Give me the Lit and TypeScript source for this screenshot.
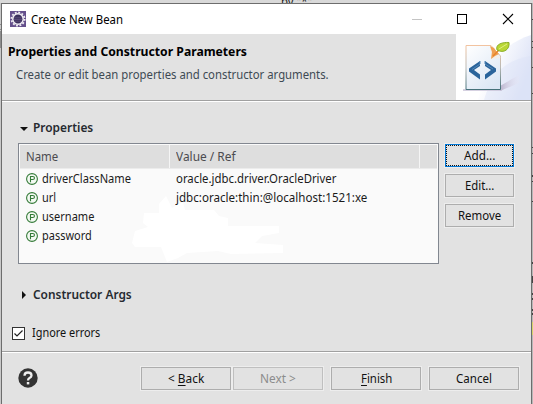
import { LitElement, html, css, svg } from "lit";
import { customElement, property } from "lit/decorators.js";

/** Text run squeezed horizontally to a given width. */
@customElement("fit-text")
class FitText extends LitElement {
  @property({ type: Number }) w = 0;
  static styles = css`
    :host { display: inline-block; white-space: nowrap; flex: none; }
    .run { display: inline-block; transform-origin: 0 50%; white-space: pre; }
  `;
  updated() {
    this.style.width = this.w + "px";
    const run = this.renderRoot.querySelector(".run") as HTMLElement;
    run.style.transform = `scaleX(${this.w / run.offsetWidth})`;
  }
  render() { return html`<span class="run"><slot></slot></span>`; }
}

@customElement("push-button")
class PushButton extends LitElement {
  static styles = css`
    :host { display: flex; box-sizing: border-box; align-items: center; justify-content: center;
      height: 23px; border: 1px solid #adadad; background: #e2e2e2; color: #111; box-shadow: 0 0 0 1px #ededed; }
    :host([focused]) { border-color: #0078d7; outline: 1px dotted #111; outline-offset: -2px; }
    :host([disabled]) { color: #8c8c8c; border-color: #bfbfbf; }
  `;
  render() { return html`<slot></slot>`; }
}

const eclipseIcon = svg`<svg width="16" height="16" viewBox="0 0 16 16">
  <rect width="16" height="16" fill="#65508c"/>
  <circle cx="8" cy="8" r="6.6" fill="none" stroke="#efedf2" stroke-width="1.8" stroke-dasharray="1.9 1.56"/>
  <circle cx="8" cy="8" r="5.2" fill="#3c315d" stroke="#f1eef4" stroke-width="1.5"/>
  <path d="M4 6.8h8M3.7 8.5h8.6M4.3 10.2h7.4" stroke="#61527f" stroke-width=".8"/>
</svg>`;

const banner = svg`<svg width="75" height="66" viewBox="0 0 75 66">
  <defs>
    <linearGradient id="bg" x1="0" y1="0" x2="1" y2=".5"><stop offset=".35" stop-color="#fff"/><stop offset="1" stop-color="#dde3f7"/></linearGradient>
    <linearGradient id="pg" x1="0" y1="0" x2=".7" y2="1"><stop offset="0" stop-color="#fff"/><stop offset="1" stop-color="#dce7f5"/></linearGradient>
    <linearGradient id="sh"><stop offset="0" stop-color="#b9b2cc"/><stop offset="1" stop-color="#e8e6f4" stop-opacity=".2"/></linearGradient>
    <linearGradient id="edge" x1="0" y1="0" x2="0" y2="1"><stop offset="0" stop-color="#f2c3a0"/><stop offset=".5" stop-color="#b9b9b5"/><stop offset="1" stop-color="#45717a"/></linearGradient>
  </defs>
  <rect width="75" height="66" fill="#fff"/>
  <path d="M22 66C29 35 44 11 75 1V66Z" fill="url(#bg)"/>
  <path d="M28 66C36 38 50 26 75 22V66Z" fill="#dce2f7" opacity=".45"/>
  <path d="M44 52L63 41V49L44 57Z" fill="url(#sh)"/>
  <path d="M7 56H46" stroke="#c9c2d7" stroke-width="1.5"/>
  <path d="M10 11.5H35L44.5 22V55.5H10Z" fill="url(#pg)" stroke="url(#edge)"/>
  <path d="M34 12L44.5 24L36 25Z" fill="#f3eee9"/>
  <path d="M34 12L38 14L40 17L43 20L39 22L35 25L36 18Z" fill="#efa052"/>
  <path d="M37 22L45 14" stroke="#e8832a" stroke-width="1.5"/>
  <path d="M41 16C39 10 47 8 53 8.500C54 15 48 20 41 16Z" fill="#b9d736" stroke="#84a821" stroke-width=".9"/>
  <path d="M43 15L51 10" stroke="#e1ef83"/>
  <path d="M24 27V32L18 36L24 40.500V45.500L13 37.500V34.500ZM29 27V32L35 36L29 40.500V45.500L40 37.500V34.500Z" fill="#2a649b"/>
  <path d="M24 27V30L16 35.500M29 27V30L37 35" fill="none" stroke="#5689b8"/>
</svg>`;

const propertyIcon = svg`<svg width="12" height="12" viewBox="0 0 12 12">
  <circle cx="6" cy="6" r="5.4" fill="#f4faf3" stroke="#347a38" stroke-width="1.1"/>
  <path d="M4.500 9.300V3.500H6.700Q8.500 3.500 8.500 5T6.700 6.500H4.500" fill="none" stroke="#347a38" stroke-width="1.1"/>
</svg>`;

const rows: [string, number, string, number][] = [
  ["driverClassName", 89, "oracle.jdbc.driver.OracleDriver", 160],
  ["url", 14, "jdbc:oracle:thin:@localhost:1521:xe", 191],
  ["username", 52, "", 0],
  ["password", 50, "", 0],
];

@customElement("app-root")
class AppRoot extends LitElement {
  static styles = css`
    * { box-sizing: border-box; }
    :host { display: block; box-sizing: border-box; width: 533px; height: 404px; overflow: hidden; position: relative; background: #c9c9c9;
      font: 12.5px/18px "Noto Sans", "Open Sans", sans-serif; color: #1b1b1b; padding: 3px 1px 0; }
    svg { display: block; flex: none; }
    .behind { position: absolute; left: 281px; top: -5px; line-height: 14px; }
    .strip { position: absolute; inset: 0 0 auto 0; height: 3px; background: #d9d9d9; }
    .window { position: relative; height: 401px; border: 1px solid #6d6d6d; border-bottom: 0; background: #e2e2e2; display: flex; flex-direction: column; }
    .title { height: 30px; background: #fff; display: flex; align-items: center; padding: 0 17px 0 8px; font-size: 13px; color: #000; flex: none; }
    .title fit-text { margin-left: 5px; }
    .controls { margin-left: auto; }
    .header { display: flex; height: 66px; flex: none; justify-content: space-between; }
    .intro { padding: 8px 0 0 6px; }
    .intro b { display: block; height: 23px; font-size: 13px; color: #000; }
    .sub { padding-left: 8px; color: #3e4a54; font-size: 13px; }
    .rule { height: 2px; border-top: 1px solid #a0a0a0; background: #fff; flex: none; }
    .body { height: 249px; flex: none; padding: 17px 16px 0; }
    .section { display: flex; align-items: center; height: 18px; font-weight: 600; color: #262a30; }
    .section svg { margin: 0 4px 0 2px; }
    .main { display: flex; margin-top: 6px; gap: 6px; }
    .table { width: 421px; height: 121px; border: 1px solid #828790; background: #fafafa; padding: 1px; position: relative; flex: none; }
    .head { display: grid; grid-template-columns: 150px 250px 1fr; height: 24px; background: #dedede; color: #4b4b4f; border-bottom: 1px solid #ececec; }
    .head > div { border-right: 1px solid #f5f5f5; padding: 3px 0 0 6px; }
    .head > div:last-child { border: 0; }
    .row { display: grid; grid-template-columns: 150px 1fr; height: 19px; position: relative; }
    .cell { display: flex; align-items: center; padding-left: 6px; gap: 4px; }
    .smear { position: absolute; left: 113px; top: 52px; }
    .side { display: grid; gap: 7px; align-content: start; padding-top: 1px; width: 69px; flex: none; }
    .args { margin-top: 22px; }
    .check { display: flex; align-items: center; margin: 20px 0 0 -6px; height: 18px; color: #111; gap: 7px; }
    .box { width: 13px; height: 13px; border: 1px solid #333; background: #fff; }
    .footer { display: flex; padding: 14px 11px 0 16px; align-items: flex-start; }
    .help { margin-top: 1px; }
    .footer push-button { width: 90px; flex: none; }
    .back { margin-left: 103px; }
    .next { margin-left: 2px; }
    .gap { margin-left: 8px; }
    u { text-underline-offset: 2px; text-decoration-thickness: 1px; text-decoration-skip-ink: none; }
    .edge { position: absolute; left: 532px; top: 3px; width: 1px; height: 401px; }
    .left { position: absolute; left: 0; top: 3px; }
  `;
  render() {
    return html`
      <div class="strip"></div>
      <div class="behind"><fit-text w="31">by "*"</fit-text></div>
      <div class="window">
        <div class="title">
          ${eclipseIcon}<fit-text w="92">Create New Bean</fit-text>
          <svg class="controls" width="102" height="12" viewBox="0 0 102 12">
            <path d="M0 6.500H10" stroke="#c4c4c4"/>
            <rect x="45.500" y="1.500" width="9" height="9" fill="none" stroke="#000"/>
            <path d="M91 1L101 11M101 1L91 11" stroke="#000" stroke-width="1.1"/>
          </svg>
        </div>
        <div class="header">
          <div class="intro">
            <b><fit-text w="239">Properties and Constructor Parameters</fit-text></b>
            <div class="sub"><fit-text w="313">Create or edit bean properties and constructor arguments.</fit-text></div>
          </div>
          ${banner}
        </div>
        <div class="rule"></div>
        <div class="body">
          <div class="section">
            <svg width="9" height="10" viewBox="0 0 9 10"><path d="M0 4H8L4 8Z" fill="#111"/></svg>
            <fit-text w="60">Properties</fit-text>
          </div>
          <div class="main">
            <div class="table">
              <svg class="smear" width="210" height="66" viewBox="0 0 210 66"><path d="M12 17H27V8L34 0L40 12L51 6L53 14H82L87 20L96 22V30H147V37L130 40L123 47L151 49V57L99 58L86 55L55 57L46 62L35 66L29 51H3L0 47L3 35L16 31L11 27Z" fill="#fff"/></svg>
              <div class="head">
                <div><fit-text w="32">Name</fit-text></div><div><fit-text w="60">Value / Ref</fit-text></div><div></div>
              </div>
              ${rows.map(([n, nw, v, vw]) => html`<div class="row">
                <div class="cell">${propertyIcon}<fit-text w=${nw}>${n}</fit-text></div>
                <div class="cell">${v ? html`<fit-text w=${vw}>${v}</fit-text>` : ""}</div>
              </div>`)}
            </div>
            <div class="side">
              <push-button focused><fit-text w="31">Add...</fit-text></push-button>
              <push-button><fit-text w="29">Edit...</fit-text></push-button>
              <push-button><fit-text w="43">Remove</fit-text></push-button>
            </div>
          </div>
          <div class="section args">
            <svg width="9" height="10" viewBox="0 0 9 10"><path d="M2 1L6 5L2 9Z" fill="#111"/></svg>
            <fit-text w="99">Constructor Args</fit-text>
          </div>
          <div class="check">
            <div class="box"><svg width="11" height="11" viewBox="0 0 11 11"><path d="M1.500 5.500L4 8L9.500 2.500" fill="none" stroke="#222" stroke-width="1.2"/></svg></div>
            <fit-text w="68">Ignore errors</fit-text>
          </div>
        </div>
        <div class="rule"></div>
        <div class="footer">
          <svg class="help" width="20" height="20" viewBox="0 0 20 20"><circle cx="10" cy="10" r="9.700" fill="#333"/><path d="M6.500 7.700Q6.500 4.500 10 4.500T13.500 7.500Q13.500 9 11.500 10Q10 10.800 10 12.500" fill="none" stroke="#eee" stroke-width="2.300"/><rect x="8.800" y="14" width="2.500" height="2.400" fill="#eee"/></svg>
          <push-button class="back"><fit-text w="36">&lt; <u>B</u>ack</fit-text></push-button>
          <push-button class="next" disabled><fit-text w="36">Next &gt;</fit-text></push-button>
          <push-button class="gap"><fit-text w="31"><u>F</u>inish</fit-text></push-button>
          <push-button class="gap"><fit-text w="36">Cancel</fit-text></push-button>
        </div>
      </div>
      <svg class="left" width="1" height="60" viewBox="0 0 1 60"><path d="M.5 21v1M.5 26v1M.5 28v17" stroke="#8d8d8d"/></svg>
      <svg class="edge" viewBox="0 0 1 401"><rect width="1" height="401" fill="#b8b8b8"/><path d="M.5 16v1M.5 38v1M.5 44v1M.5 64v1M.5 90v1M.5 144v1M.5 150v1M.5 172v2M.5 178v1M.5 198v1M.5 259v2M.5 273v7M.5 290v2M.5 295v2M.5 306v2M.5 310v2" stroke="#444"/><path d="M.5 319v13" stroke="#d7d56b"/></svg>
    `;
  }
}
